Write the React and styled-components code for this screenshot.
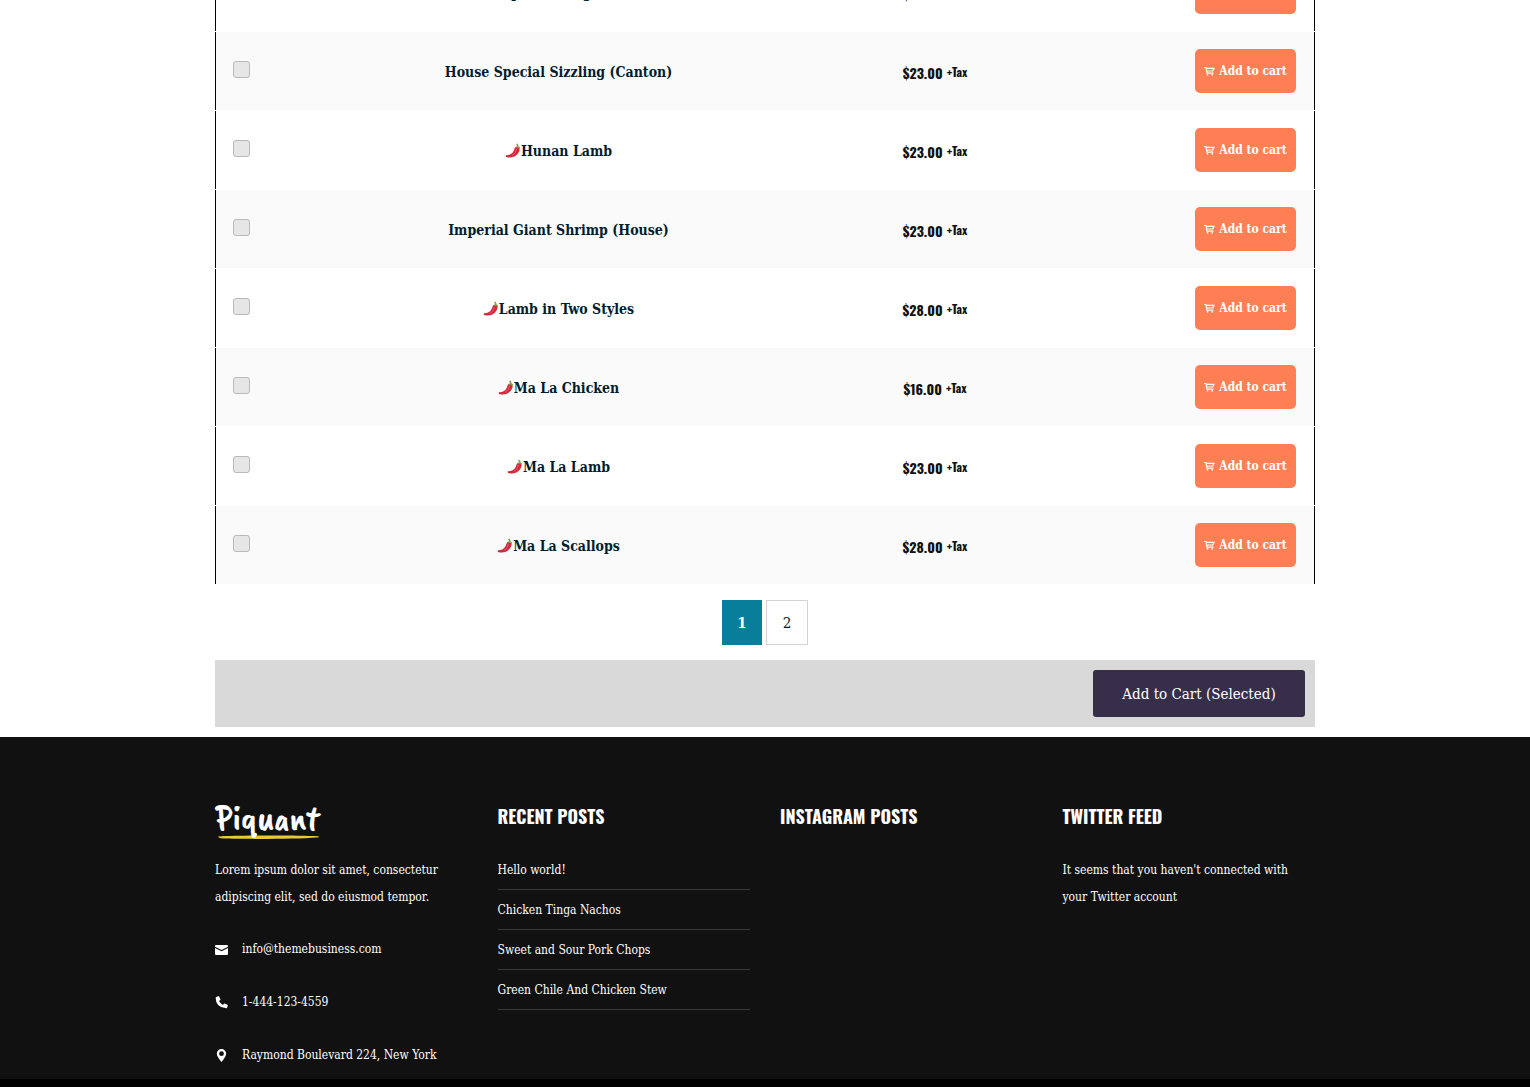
import styled, { createGlobalStyle } from 'styled-components';

const slab = `'Roboto Slab', 'DejaVu Serif Condensed', 'DejaVu Serif', serif`;
const narrow = `Oswald, 'Liberation Sans Narrow', 'DejaVu Sans Condensed', sans-serif`;

const GlobalStyle = createGlobalStyle`
  * {
    box-sizing: border-box;
  }
  body {
    margin: 0;
    background: #fff;
    color: #001d2e;
    font-family: ${slab};
    overflow-x: hidden;
  }
`;

const Page = styled.div`
  display: flex;
  flex-direction: column;
  min-height: 100vh;
`;
const Container = styled.div`
  width: 100%;
  max-width: 1100px;
  margin: 0 auto;
`;

// products table
const ProductTable = styled.table`
  width: 100%;
  margin-top: -48px;
  table-layout: fixed;
  border-collapse: separate;
  border-spacing: 0 1px;
`;
const Col = styled.col`
  width: ${({ $width }) => $width};
`;
const Row = styled.tr`
  height: 78px;
  background: #fff;
  &:nth-child(even) {
    background: #fafafa;
  }
`;
const Cell = styled.td`
  padding: 0;
  text-align: ${({ $align }) => $align || 'center'};
  vertical-align: middle;
  &:first-child {
    padding-left: 17px;
    border-left: 1px solid #000;
  }
  &:last-child {
    padding-right: 18px;
    border-right: 1px solid #000;
  }
`;
const Check = styled.input`
  appearance: none;
  display: block;
  width: 17px;
  height: 17px;
  margin: 0 0 3px;
  border: 1px solid #b9b9b9;
  border-radius: 3px;
  background: #e6e6e6;
  &:checked {
    background: #087e9b;
  }
`;
const Name = styled.a`
  display: inline-flex;
  align-items: center;
  padding-top: 2px;
  color: #001d2e;
  font-size: 14px;
  font-weight: 700;
  line-height: 24px;
  text-decoration: none;
`;
const ChiliIcon = styled.svg`
  width: 16px;
  height: 16px;
`;
const Price = styled.span`
  display: inline-flex;
  align-items: center;
  gap: 4px;
  padding-top: 4px;
  color: #111;
  font-family: ${narrow};
  font-size: 14px;
  font-weight: 700;
  line-height: 24px;
`;
const Tax = styled.small`
  padding-bottom: 2px;
  font-size: 12px;
  line-height: 22px;
`;
const CartButton = styled.button`
  display: inline-flex;
  align-items: center;
  justify-content: center;
  gap: 4px;
  width: 101px;
  height: 44px;
  padding: 0;
  border: 0;
  border-radius: 5px;
  background: #ff7f55;
  color: #fff;
  font-family: ${slab};
  font-size: 12px;
  font-weight: 700;
  white-space: nowrap;
  vertical-align: middle;
`;

// below the table
const Pagination = styled.nav`
  display: flex;
  justify-content: center;
  gap: 4px;
  padding: 15px 0;
`;
const PageLink = styled.a`
  display: flex;
  align-items: center;
  justify-content: center;
  width: ${({ $active }) => ($active ? '40px' : '42px')};
  height: 45px;
  border: ${({ $active }) => ($active ? '0' : '1px solid #d3d3d3')};
  background: ${({ $active }) => ($active ? '#087e9b' : '#fff')};
  color: ${({ $active }) => ($active ? '#fff' : '#001d2e')};
  font-size: 15px;
  font-weight: ${({ $active }) => ($active ? 700 : 400)};
  text-decoration: none;
`;
const SelectedBar = styled.div`
  display: flex;
  justify-content: flex-end;
  margin-bottom: 10px;
  padding: 10px;
  background: #d9d9d9;
`;
const SelectedButton = styled.button`
  width: 212px;
  height: 47px;
  padding: 0;
  border: 0;
  border-radius: 3px;
  background: #372f49;
  color: #fff;
  font-family: ${slab};
  font-size: 15px;
`;

// footer
const Footer = styled.footer`
  padding: 62px 0 10px;
  background: #111;
  color: #fff;
`;
const FooterGrid = styled.div`
  display: grid;
  grid-template-columns: repeat(4, 1fr);
  gap: 30px;
`;
const Logo = styled.svg`
  display: block;
  width: 106px;
  height: 42px;
  margin-bottom: 16px;
  overflow: visible;
`;
const LogoText = styled.text`
  fill: #fff;
  font-family: 'Caveat Brush', Caveat, 'Liberation Sans Narrow', cursive;
  font-size: 37px;
  font-weight: 400;
`;
const Heading = styled.h3`
  margin: 0;
  padding: 1px 0 25px;
  font-family: ${narrow};
  font-size: 18px;
  font-weight: 700;
  line-height: 32px;
`;
const Text = styled.p`
  margin: 0;
  font-size: 12px;
  line-height: 27px;
`;
const Contacts = styled.ul`
  display: flex;
  flex-direction: column;
  gap: 26px;
  margin: 25px 0 0;
  padding: 0;
  list-style: none;
`;
const Contact = styled.li`
  display: flex;
  align-items: center;
  gap: 14px;
  font-size: 12px;
  line-height: 27px;
`;
const ContactIcon = styled.svg`
  width: 13px;
  height: 14px;
  fill: #fff;
`;
const Posts = styled.ul`
  margin: 0;
  padding: 3px 0 0;
  list-style: none;
`;
const Post = styled.li`
  margin-bottom: 10px;
  padding-bottom: 8px;
  border-bottom: 1px solid #3a3a3a;
  font-size: 12px;
  line-height: 21px;
`;
const PostLink = styled.a`
  color: #fff;
  text-decoration: none;
`;
const BottomBar = styled.div`
  flex: 1;
  background: #000;
`;

const products = [
  { name: 'House Special Ginger (Chicken)', price: '$23.00', spicy: true },
  { name: 'House Special Sizzling (Canton)', price: '$23.00' },
  { name: 'Hunan Lamb', price: '$23.00', spicy: true },
  { name: 'Imperial Giant Shrimp (House)', price: '$23.00' },
  { name: 'Lamb in Two Styles', price: '$28.00', spicy: true },
  { name: 'Ma La Chicken', price: '$16.00', spicy: true },
  { name: 'Ma La Lamb', price: '$23.00', spicy: true },
  { name: 'Ma La Scallops', price: '$28.00', spicy: true },
];

const posts = [
  'Hello world!',
  'Chicken Tinga Nachos',
  'Sweet and Sour Pork Chops',
  'Green Chile And Chicken Stew',
];

const Chili = () => (
  <ChiliIcon viewBox='0 0 16 16' aria-hidden='true'>
    <path
      d='M10.200 4.200c1-1 3.600-.8 4.200.4.600 1.800-.2 4.800-2.400 7C9.600 14.200 5 15.300 1.200 13.900c-.9-.4-.7-1.500.2-1.600 2.800-.2 5-1 6.500-3 1.200-1.600 1.300-3.700 2.300-5.100z'
      fill='#d4283f'
    />
    <path d='M11.300 6c-.4 3-1.800 5-4.300 6.300' fill='none' stroke='#ea6574' strokeWidth='.8' />
    <path
      d='M12 3.700c.1-1.200-.3-1.800-1-2.500l1.300-.7c.9.8 1.200 1.800 1.200 3 .9.200 1.500.8 1.500 2-1-.5-1.500-.7-2.200-.3-.8-.6-1.700-.5-2.600.3 0-1 .7-1.700 1.800-1.800z'
      fill='#72a84a'
    />
  </ChiliIcon>
);

const CartIcon = () => (
  <svg width='11' height='11' viewBox='0 0 11 11' fill='none' stroke='#fff' aria-hidden='true'>
    <path d='M0 1.500h2l1 5.700h6.500' strokeWidth='1.200' />
    <path d='M2 2.300h8L8.800 5H2.800' strokeWidth='1.200' />
    <circle cx='3.500' cy='8.800' r='.9' fill='#fff' stroke='none' />
    <circle cx='8.200' cy='8.800' r='.9' fill='#fff' stroke='none' />
  </svg>
);

const App = () => {
  return (
    <>
      <GlobalStyle />
      <Page>
        <Container as='main'>
          <ProductTable>
            <colgroup>
              <Col $width='52px' />
              <Col $width='53%' />
              <Col $width='170px' />
              <Col />
            </colgroup>
            <tbody>
              {products.map(({ name, price, spicy }) => (
                <Row key={name}>
                  <Cell>
                    <Check type='checkbox' aria-label={`Select ${name}`} />
                  </Cell>
                  <Cell>
                    <Name href='#'>
                      {spicy && <Chili />}
                      {name}
                    </Name>
                  </Cell>
                  <Cell>
                    <Price>
                      {price} <Tax>+Tax</Tax>
                    </Price>
                  </Cell>
                  <Cell $align='right'>
                    <CartButton type='button'>
                      <CartIcon />
                      Add to cart
                    </CartButton>
                  </Cell>
                </Row>
              ))}
            </tbody>
          </ProductTable>
          <Pagination aria-label='Pages'>
            <PageLink href='#' $active aria-current='page'>
              1
            </PageLink>
            <PageLink href='#'>2</PageLink>
          </Pagination>
          <SelectedBar>
            <SelectedButton type='button'>Add to Cart (Selected)</SelectedButton>
          </SelectedBar>
        </Container>

        <Footer>
          <Container>
            <FooterGrid>
              <div>
                <Logo viewBox='0 0 106 42' role='img' aria-label='Piquant'>
                  <path
                    d='M3 37.500C25 36.300 80 36.200 103 37.200c1.500.2 1.200.9-.5 1.300C80 40.300 30 40 8 39.600c-3-.3-5-1-5-2.100z'
                    fill='#e8c93a'
                  />
                  <LogoText x='0' y='31'>
                    Piquant
                  </LogoText>
                </Logo>
                <Text>Lorem ipsum dolor sit amet, consectetur adipiscing elit, sed do eiusmod tempor.</Text>
                <Contacts>
                  <Contact>
                    <ContactIcon viewBox='0 0 13 14' aria-hidden='true'>
                      <path d='M1 2h11q1 0 1 1v.7L6.500 7 0 3.700V3q0-1 1-1z' />
                      <path d='M0 5l6.500 3.200L13 5v6q0 1-1 1H1q-1 0-1-1z' />
                    </ContactIcon>
                    info@themebusiness.com
                  </Contact>
                  <Contact>
                    <ContactIcon viewBox='0 0 13 14' aria-hidden='true'>
                      <path d='M1.200 1 3.300.2q.6-.1.900.4l1.200 2.600q.2.500-.2.900L4 5.100q1.300 2.600 3.900 3.900l1-1.300q.4-.4.900-.2l2.600 1.200q.5.300.4.900l-.7 2.100q-.2.500-.8.500Q.6 11.700.7 1.700q0-.5.500-.7z' />
                    </ContactIcon>
                    1-444-123-4559
                  </Contact>
                  <Contact>
                    <ContactIcon viewBox='0 0 13 14' aria-hidden='true'>
                      <path
                        fillRule='evenodd'
                        d='M6.500 0a4.700 4.700 0 0 1 4.700 4.700C11.200 7.500 8.500 10 6.500 13 4.500 10 1.800 7.500 1.800 4.700A4.700 4.700 0 0 1 6.500 0zm0 2.300a2.400 2.400 0 1 0 0 4.800 2.400 2.400 0 0 0 0-4.800z'
                      />
                    </ContactIcon>
                    Raymond Boulevard 224, New York
                  </Contact>
                </Contacts>
              </div>
              <div>
                <Heading>RECENT POSTS</Heading>
                <Posts>
                  {posts.map((post) => (
                    <Post key={post}>
                      <PostLink href='#'>{post}</PostLink>
                    </Post>
                  ))}
                </Posts>
              </div>
              <div>
                <Heading>INSTAGRAM POSTS</Heading>
              </div>
              <div>
                <Heading>TWITTER FEED</Heading>
                <Text>It seems that you haven't connected with your Twitter account</Text>
              </div>
            </FooterGrid>
          </Container>
        </Footer>
        <BottomBar />
      </Page>
    </>
  );
};

export default App;
